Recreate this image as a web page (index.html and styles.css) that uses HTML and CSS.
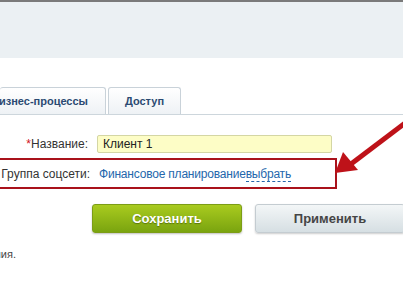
FILE: index.html
```html
<!DOCTYPE html>
<html lang="ru">

<head>
  <meta charset="UTF-8">
  <title>Группа соцсети</title>
  <link rel="stylesheet" href="styles.css">
</head>

<body>
  <div class="topbar"></div>
  <div class="header"></div>

  <div class="tabs">
    <div class="tab tab-first"><span>Бизнес-процессы</span></div>
    <div class="tab">Доступ</div>
  </div>

  <div class="form">
    <div class="row">
      <label class="label"><span class="req">*</span>Название:</label>
      <div class="value"><input class="field" type="text" value="Клиент 1"></div>
    </div>
    <div class="row row-marked">
      <label class="label">Группа соцсети:</label>
      <div class="value"><a class="link" href="#">Финансовое планирование</a><a class="link pick" href="#">выбрать</a></div>
    </div>
  </div>

  <div class="buttons">
    <button class="btn btn-save">Сохранить</button>
    <button class="btn btn-apply">Применить</button>
  </div>

  <div class="note"><span>Поля, отмеченные звёздочкой, обязательны для заполнения.</span></div>

  <div class="bottombar"></div>

  <svg class="arrow" width="80" height="70" viewBox="0 0 80 70">
    <line x1="76" y1="6" x2="18" y2="50" stroke="#be1219" stroke-width="5" />
    <polygon points="2,59 10,38 25,56" fill="#be1219" />
  </svg>
</body>

</html>
```

FILE: styles.css
```css
body {
  margin: 0;
  padding: 0;
  width: 403px;
  height: 294px;
  overflow: hidden;
  position: relative;
  font-family: "Liberation Sans", Arial, sans-serif;
  font-size: 12px;
  color: #333;
  background: #fff;
}

.topbar {
  height: 2px;
  background: #7a7a7a;
}

.header {
  height: 56px;
  background: #ebf0f3;
}

/* tabs */
.tabs {
  display: flex;
  gap: 2px;
  margin-top: 29px;
  height: 27px;
  border-bottom: 1px solid #cdd6dc;
}

.tab {
  display: flex;
  align-items: center;
  justify-content: center;
  width: 71px;
  border: 1px solid #c9d2d9;
  border-bottom: none;
  border-radius: 3px 3px 0 0;
  background: linear-gradient(#ffffff, #eef2f5);
  font-weight: bold;
  font-size: 11px;
  color: #2b4a72;
}

.tab-first {
  width: 106px;
  justify-content: flex-end;
  padding-right: 17px;
  box-sizing: border-box;
  white-space: nowrap;
  border-left: none;
}

/* form rows */
.form {
  margin-top: 20px;
}

.row {
  display: flex;
  align-items: center;
  height: 18px;
}

.label {
  width: 88px;
  flex: none;
  display: flex;
  justify-content: flex-end;
  white-space: nowrap;
}

.req {
  color: #d0101a;
}

.value {
  margin-left: 9px;
  white-space: nowrap;
}

.field {
  width: 235px;
  height: 18px;
  box-sizing: border-box;
  margin: 0;
  padding: 0 5px;
  border: 1px solid #d4d6a4;
  border-radius: 2px;
  background: #fdfdc6;
  font-family: inherit;
  font-size: 12px;
  color: #222;
}

.row-marked {
  margin-top: 5px;
  margin-left: -10px;
  padding-left: 10px;
  width: 333px;
  height: 27px;
  border: 2px solid #a9121b;
  box-sizing: content-box;
}

.link {
  color: #2467ac;
  text-decoration: none;
  letter-spacing: -0.2px;
}

.pick {
  border-bottom: 1px dashed #2467ac;
}

/* buttons */
.buttons {
  display: flex;
  gap: 13px;
  margin-top: 15px;
  padding-left: 92px;
}

.btn {
  flex: none;
  width: 150px;
  height: 29px;
  border-radius: 3px;
  font-family: inherit;
  font-size: 13px;
  font-weight: bold;
  padding: 0;
}

.btn-save {
  border: 1px solid #7c9d16;
  background: linear-gradient(#a9cb1f, #7aa40f);
  color: #fff;
  text-shadow: 0 1px 1px rgba(60, 80, 0, 0.6);
  box-shadow: 0 1px 2px rgba(0, 0, 0, 0.25);
}

.btn-apply {
  border: 1px solid #c4ccd1;
  background: linear-gradient(#f3f6f7, #d6dfe3);
  color: #454545;
  box-shadow: 0 1px 2px rgba(0, 0, 0, 0.2);
}

.note {
  width: 16px;
  display: flex;
  justify-content: flex-end;
  white-space: nowrap;
  margin-top: 15px;
  font-size: 11px;
  color: #444;
}

.bottombar {
  margin-top: 34px;
  height: 3px;
  background: #7a7a7a;
}

.arrow {
  position: absolute;
  left: 333px;
  top: 114px;
}
```
